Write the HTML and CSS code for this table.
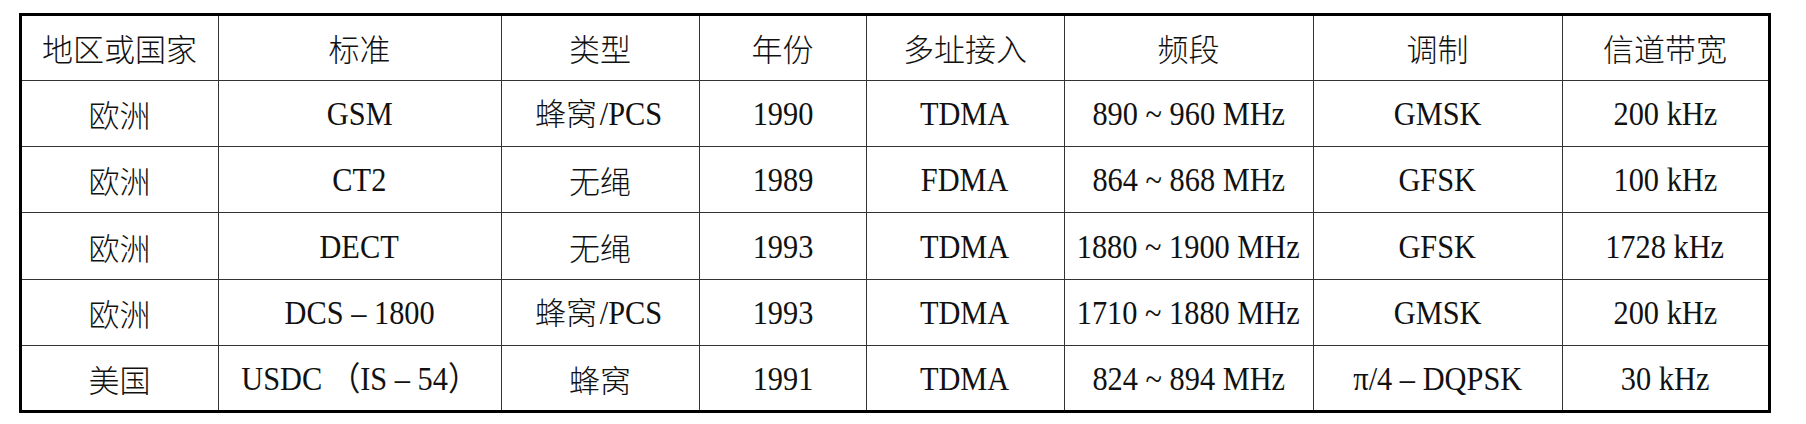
FILE: index.html
```html
<!DOCTYPE html>
<html lang="zh-CN">
<head>
<meta charset="utf-8">
<title>蜂窝与无绳标准</title>
<link rel="stylesheet" href="styles.css">
</head>
<body>
<table class="std">
  <colgroup>
    <col class="c1"><col class="c2"><col class="c3"><col class="c4">
    <col class="c5"><col class="c6"><col class="c7"><col class="c8">
  </colgroup>
  <thead>
    <tr>
      <th>地区或国家</th><th>标准</th><th>类型</th><th>年份</th>
      <th>多址接入</th><th>频段</th><th>调制</th><th>信道带宽</th>
    </tr>
  </thead>
  <tbody>
    <tr>
      <td>欧洲</td><td><span class="lat">GSM</span></td><td>蜂窝<span class="lat">/PCS</span></td><td><span class="lat">1990</span></td>
      <td><span class="lat">TDMA</span></td><td><span class="lat">890 ~ 960 MHz</span></td><td><span class="lat">GMSK</span></td><td><span class="lat">200 kHz</span></td>
    </tr>
    <tr>
      <td>欧洲</td><td><span class="lat">CT2</span></td><td>无绳</td><td><span class="lat">1989</span></td>
      <td><span class="lat">FDMA</span></td><td><span class="lat">864 ~ 868 MHz</span></td><td><span class="lat">GFSK</span></td><td><span class="lat">100 kHz</span></td>
    </tr>
    <tr>
      <td>欧洲</td><td><span class="lat">DECT</span></td><td>无绳</td><td><span class="lat">1993</span></td>
      <td><span class="lat">TDMA</span></td><td><span class="lat">1880 ~ 1900 MHz</span></td><td><span class="lat">GFSK</span></td><td><span class="lat">1728 kHz</span></td>
    </tr>
    <tr>
      <td>欧洲</td><td><span class="lat">DCS – 1800</span></td><td>蜂窝<span class="lat">/PCS</span></td><td><span class="lat">1993</span></td>
      <td><span class="lat">TDMA</span></td><td><span class="lat">1710 ~ 1880 MHz</span></td><td><span class="lat">GMSK</span></td><td><span class="lat">200 kHz</span></td>
    </tr>
    <tr>
      <td>美国</td><td><span class="lat">USDC （IS – 54）</span></td><td>蜂窝</td><td><span class="lat">1991</span></td>
      <td><span class="lat">TDMA</span></td><td><span class="lat">824 ~ 894 MHz</span></td><td><span class="lat">π/4 – DQPSK</span></td><td><span class="lat">30 kHz</span></td>
    </tr>
  </tbody>
</table>
</body>
</html>
```

FILE: styles.css
```css
html, body {
  margin: 0;
  padding: 0;
  background: #ffffff;
}

body {
  padding: 12.5px 0 0 18.5px;
  font-family: "Liberation Serif", "Noto Sans CJK SC", serif;
  color: #111111;
}

.std {
  border-collapse: collapse;
  table-layout: fixed;
  width: 1749px;
  border: 3px solid #000000;
}

.c1 { width: 198px; }
.c2 { width: 283px; }
.c3 { width: 198px; }
.c4 { width: 167px; }
.c5 { width: 198px; }
.c6 { width: 249px; }
.c7 { width: 249px; }
.c8 { width: 207px; }

.std tr {
  height: 66.33px;
}

.std th,
.std td {
  border: 1.5px solid #333333;
  padding: 0;
  text-align: center;
  vertical-align: middle;
  font-family: "Noto Sans CJK SC", sans-serif;
  font-weight: 300;
  font-size: 31px;
  line-height: 1;
  white-space: nowrap;
}

.lat {
  display: inline-block;
  font-family: "Liberation Serif", "Noto Sans CJK SC", serif;
  font-weight: 400;
  font-size: 33px;
  transform: scaleX(0.92);
}
```
